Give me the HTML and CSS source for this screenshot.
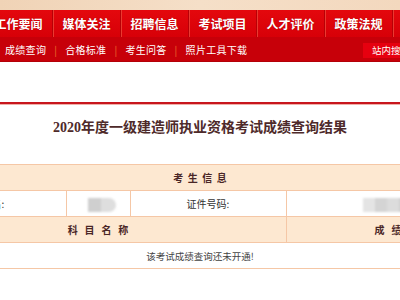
FILE: index.html
```html
<!DOCTYPE html>
<html lang="zh-CN">
<head>
<meta charset="utf-8">
<title>成绩查询结果</title>
<link rel="stylesheet" href="styles.css">
</head>
<body>
<div class="topband"></div>
<div class="nav">
  <ul class="nav-list">
    <li>工作要闻</li>
    <li>媒体关注</li>
    <li>招聘信息</li>
    <li>考试项目</li>
    <li>人才评价</li>
    <li>政策法规</li>
  </ul>
</div>
<div class="subnav">
  <ul class="sub-list">
    <li>成绩查询</li>
    <li class="sep">|</li>
    <li>合格标准</li>
    <li class="sep">|</li>
    <li>考生问答</li>
    <li class="sep">|</li>
    <li>照片工具下载</li>
  </ul>
  <div class="search">站内搜索</div>
</div>
<div class="gap"></div>
<div class="redline"></div>
<h1 class="title">2020年度一级建造师执业资格考试成绩查询结果</h1>
<div class="table-wrap">
  <table class="result">
    <colgroup>
      <col class="c1"><col class="c2"><col class="c3"><col class="c4">
    </colgroup>
    <tr class="head"><td colspan="4">考&nbsp;&nbsp;生&nbsp;&nbsp;信&nbsp;&nbsp;息</td></tr>
    <tr class="row">
      <td>姓　名:</td>
      <td><span class="blur b1"></span></td>
      <td>证件号码:</td>
      <td><span class="blur b2"></span></td>
    </tr>
    <tr class="head">
      <td colspan="3">科&nbsp;&nbsp;&nbsp;目&nbsp;&nbsp;&nbsp;名&nbsp;&nbsp;&nbsp;称</td>
      <td>成&nbsp;&nbsp;&nbsp;绩</td>
    </tr>
    <tr class="row msg"><td colspan="4">该考试成绩查询还未开通!</td></tr>
  </table>
</div>
</body>
</html>
```
FILE: styles.css
```css
html, body {
  margin: 0;
  padding: 0;
  overflow: hidden;
  background: #fff;
  font-family: "Noto Sans CJK SC", "Noto Sans", sans-serif;
}
ul { margin: 0; padding: 0; list-style: none; }
.topband {
  height: 10px;
  background: linear-gradient(90deg, #f0d3b6 0%, #f5dfc8 50%, #f3d8be 100%);
}
.nav {
  height: 27px;
  background: linear-gradient(#e4080d, #d70008);
  overflow: hidden;
}
.nav-list {
  display: flex;
  margin-left: -15px;
  height: 27px;
}
.nav-list li {
  flex: 0 0 67px;
  border-right: 1px solid #b80006;
  box-shadow: 1px 0 0 #ea3a30;
  color: #fff;
  font-size: 12px;
  font-weight: 700;
  line-height: 27px;
  text-align: center;
  text-shadow: 0 0 1px rgba(120,0,0,0.6);
}
.subnav {
  height: 25px;
  background: #c70009;
  display: flex;
  align-items: center;
  border-bottom: 1px solid #b30008;
  box-sizing: border-box;
  overflow: hidden;
}
.sub-list {
  display: flex;
  align-items: center;
  padding-left: 5px;
  height: 25px;
}
.sub-list li {
  color: #fff;
  font-size: 10px;
  letter-spacing: 0.3px;
  line-height: 25px;
}
.sub-list li.sep {
  color: #f0702a;
  padding: 0 8px;
  font-size: 10px;
}
.search {
  flex: 0 0 auto;
  margin-left: auto;
  margin-right: -23px;
  width: 51px;
  height: 15px;
  margin-top: 2px;
  background: #e6000f;
  color: #fff;
  font-size: 9.5px;
  line-height: 15px;
  padding-left: 9px;
  white-space: nowrap;
  overflow: hidden;
}
.gap { height: 40px; }
.redline {
  height: 2px;
  background: #c8161d;
  border-bottom: 1px solid #f0b0a8;
}
.title {
  margin: 14px 0 0;
  height: 45px;
  text-align: center;
  font-family: "Liberation Serif", "Noto Sans CJK SC", serif;
  font-size: 14px;
  font-weight: 700;
  color: #4e2a2a;
  line-height: 18px;
}
.table-wrap {
  display: flex;
  justify-content: center;
}
.result {
  flex: 0 0 580px;
  width: 580px;
  border-collapse: collapse;
  table-layout: fixed;
}
.c1 { width: 156px; }
.c2 { width: 64px; }
.c3 { width: 156px; }
.c4 { width: 204px; }
.result td {
  border: 1px solid #f5c7a6;
  height: 25px;
  padding: 0;
  text-align: center;
  font-size: 10px;
  color: #333;
}
.head td {
  background: #fde8d1;
  font-weight: 700;
  color: #4a2626;
}
.row td { background: #fff; }
.msg td { font-size: 9.5px; color: #444; }
.blur {
  display: inline-block;
  vertical-align: middle;
  height: 14px;
  filter: blur(1px);
  border-radius: 0 7px 7px 0;
}
.b1 {
  width: 28px;
  margin-left: 8px;
  background: linear-gradient(90deg, #cfcfcf 0 45%, #dedede 45% 100%);
}
.b2 {
  width: 60px;
  margin-left: 10px;
  border-radius: 0;
  background: linear-gradient(90deg, #e4e4e4 0 20%, #d4d4d4 20% 40%, #dcdcdc 40% 60%, #d0d0d0 60% 80%, #e0e0e0 80% 100%);
}
```
